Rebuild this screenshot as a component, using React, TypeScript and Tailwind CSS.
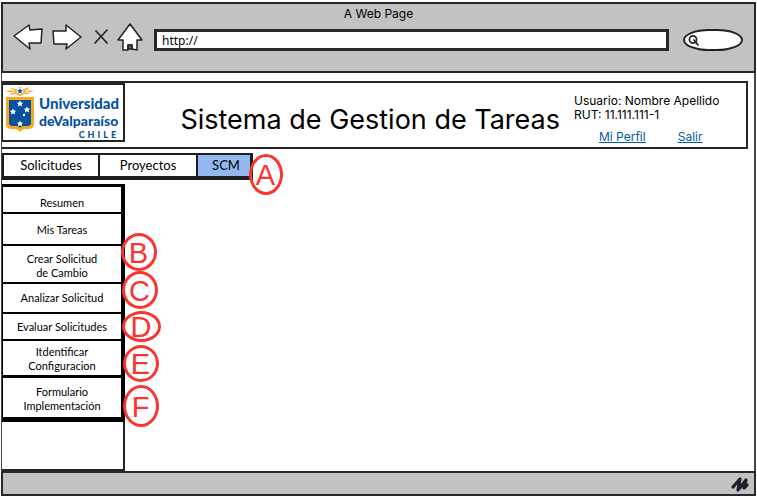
import type { ReactNode } from "react";

type Marker = { letter: string; place: string };

const menu: { lines: string[]; box: string; marker?: Marker }[] = [
  { lines: ["Resumen"], box: "h-[27px] border-b-2 pt-[9px]" },
  { lines: ["Mis Tareas"], box: "h-8 border-b-2 pt-[9px]" },
  {
    lines: ["Crear Solicitud", "de Cambio"],
    box: "h-[38px] border-b-2 pt-[6px]",
    marker: { letter: "B", place: "left-[119px] -top-[13px] h-[38px] w-9" },
  },
  {
    lines: ["Analizar Solicitud"],
    box: "h-[30px] border-b-2 pt-[7px]",
    marker: { letter: "C", place: "left-[120px] -top-[13px] h-[38px] w-9" },
  },
  {
    lines: ["Evaluar Solicitudes"],
    box: "h-[27px] border-b-2 pt-[6px]",
    marker: { letter: "D", place: "left-[120px] -top-[3px] h-[31px] w-[39px]" },
  },
  {
    lines: ["Itdentificar", "Configuracion"],
    box: "h-[37px] border-b-[3px] pt-[4px]",
    marker: { letter: "E", place: "left-[121px] top-[4px] h-[37px] w-9" },
  },
  {
    lines: ["Formulario", "Implementación"],
    box: "h-[44px] border-b-[5px] pt-[7px]",
    marker: { letter: "F", place: "left-[121px] top-[7px] h-[42px] w-9" },
  },
];

function Badge({ letter, place }: Marker) {
  return (
    <span
      className={`absolute z-10 flex items-center justify-center rounded-[50%] border-[3px] border-[#f9352f] pt-[2px] pr-px font-['Liberation_Sans',sans-serif] text-[29px] leading-none text-[#f9352f] ${place}`}
    >
      {letter}
    </span>
  );
}

function ToolButton({ label, children }: { label: string; children: ReactNode }) {
  return (
    <button type="button" aria-label={label} className="shrink-0">
      {children}
    </button>
  );
}

function Crest() {
  return (
    <svg viewBox="0 0 30 48" className="h-12 w-[30px] shrink-0" aria-hidden="true">
      <path d="M0 5 L8 4 L5 2 L12 3 Q15 -1 18 3 L25 1 L22 4 L29 5 L23 7 L26 8 L19 8 Q15 12 11 8 L4 9 L7 7Z" fill="#f8b43c" />
      <path d="M3 3 L10 5 M3 7 L10 6 M27 3 L20 5 M27 7 L20 6" stroke="#fff" strokeWidth=".7" />
      <circle cx="15" cy="5" r="3.2" fill="#fff" />
      <path d="M15 2l.9 2 2.1.2-1.6 1.4.5 2.1-1.9-1.1-1.9 1.1.5-2.1L12 4.200l2.100-.2z" fill="#1457a0" />
      <path d="M1 11H29V38Q29 43 23 43H20Q17 43 15 46Q13 43 10 43H7Q1 43 1 38Z" fill="#f7a823" />
      <path d="M4 14H26V37Q26 40 22 40H19Q16 40 15 42Q14 40 11 40H8Q4 40 4 37Z" fill="#07529f" />
      <g fill="#fff">
        <path d="M15 14.500l1 2 2.200.2-1.600 1.500.5 2.300-2.100-1.200-2.100 1.200.5-2.300-1.600-1.500 2.200-.2z" />
        <path d="M8 22.500l1 2 2.200.2-1.600 1.500.5 2.300-2.100-1.200-2.100 1.200.5-2.300-1.600-1.500 2.200-.2z" />
        <path d="M22 20.500l1 2 2.200.2-1.600 1.500.5 2.300-2.100-1.200-2.100 1.200.5-2.300-1.600-1.500 2.200-.2z" />
        <path d="M15 34.500l1 2 2.200.2-1.600 1.500.5 2.300-2.100-1.200-2.100 1.200.5-2.300-1.600-1.500 2.200-.2z" />
        <circle cx="19" cy="29" r="1.200" />
      </g>
    </svg>
  );
}

export default function App() {
  return (
    <div className="flex min-h-screen flex-col bg-white px-px pt-[2px] pb-[2px] font-[Inter,sans-serif] text-black">
      <header className="h-[71px] border-2 border-[#25282b] bg-[#c2c2c2]">
        <h1 className="pt-[2px] text-center text-xs leading-4">A Web Page</h1>
        <div className="flex items-center pt-px pr-[11px] pl-[10px]">
          <ToolButton label="Atrás">
            <svg viewBox="0 0 30 28" className="h-7 w-[30px]" fill="#fff" stroke="#222" strokeWidth="1.500" strokeLinejoin="round">
              <path d="M1 13 L16 2 L17 7 L29 6 L28 20 L16 20 L17 26Z" />
            </svg>
          </ToolButton>
          <span className="w-[9px]" />
          <ToolButton label="Adelante">
            <svg viewBox="0 0 30 28" className="h-7 w-[30px]" fill="#fff" stroke="#222" strokeWidth="1.500" strokeLinejoin="round">
              <path d="M1 8 L14 8 L14 2 L29 14 L14 26 L15 21 L2 21Z" />
            </svg>
          </ToolButton>
          <span className="w-3" />
          <ToolButton label="Detener">
            <svg viewBox="0 0 14 28" className="h-7 w-[14px]" fill="none" stroke="#222" strokeWidth="1.700" strokeLinecap="round">
              <path d="M2 8 L13 20 M13 7 L1 20" />
            </svg>
          </ToolButton>
          <span className="w-[9px]" />
          <ToolButton label="Inicio">
            <svg viewBox="0 0 26 28" className="h-7 w-[26px]" fill="#fff" stroke="#222" strokeWidth="1.500" strokeLinejoin="round">
              <path d="M13 1 L25 17 L20 17 L20 27 L15 26 L15 22 L11 22 L11 27 L6 27 L6 17 L1 17Z" />
              <path d="M11 22H15V26H11Z" fill="#555" />
            </svg>
          </ToolButton>
          <input
            aria-label="Dirección"
            defaultValue="http://"
            className="mt-[6px] ml-[11px] h-[22px] min-w-0 flex-1 border-[3px] border-[#25282d] bg-white pl-[5px] font-['Noto_Sans',sans-serif] text-xs leading-4 outline-none"
          />
          <label className="mt-[6px] ml-[14px] flex h-[22px] w-[60px] shrink-0 items-center rounded-[26px/11px] border-2 border-[#222] bg-white pl-[3px]">
            <svg viewBox="0 0 12 13" className="h-[13px] w-3 shrink-0" fill="none" stroke="#222" strokeWidth="1.700" strokeLinecap="round">
              <circle cx="5" cy="5.500" r="3.600" />
              <path d="M6 6 L10 11" />
            </svg>
            <input type="search" aria-label="Buscar" className="w-8 min-w-0 bg-transparent text-xs outline-none" />
          </label>
        </div>
      </header>

      <main className="flex flex-1 flex-col border-r-2 border-l border-[#44464c] pt-2">
        <section className="mr-[6px] flex h-[68px] border-2 border-l-0 border-[#25252a]">
          <div className="flex h-[59px] w-[123px] shrink-0 border-2 border-l border-[#222] pt-px pl-[2px]">
            <Crest />
            <div className="pt-2 pl-[4px] font-[Lato,sans-serif] font-black text-[#07529f]">
              <p className="text-[15px] leading-[18px]">Universidad</p>
              <p className="text-[14px] leading-[17px]">deValparaíso</p>
              <p className="text-right text-[9px] leading-[11px] tracking-[3px]">CHILE</p>
            </div>
          </div>
          <h2 className="flex-1 pt-[19px] pr-[14px] text-right text-[27px] leading-9 whitespace-nowrap">
            Sistema de Gestion de Tareas
          </h2>
          <div className="w-[172px] shrink-0 pt-[11px] text-xs leading-[14px]">
            <p>Usuario: Nombre Apellido</p>
            <p>RUT: 11.111.111-1</p>
            <div className="flex gap-[32px] pt-2 pl-[25px] text-[#0759a0] underline">
              <a href="#perfil">Mi Perfil</a>
              <a href="#salir">Salir</a>
            </div>
          </div>
        </section>

        <nav className="mt-1 flex h-[27px] font-[Lato,sans-serif] text-[13px]">
          <button type="button" className="w-[98px] border-2 border-b-4 border-[#1c1e22]">Solicitudes</button>
          <button type="button" className="w-[98px] border-2 border-b-4 border-l-0 border-[#1c1e22]">Proyectos</button>
          <div className="relative flex">
            <button type="button" className="w-[55px] border-2 border-r-[3px] border-b-4 border-l-0 border-[#1c1e22] bg-[#93b8f0] pl-1">SCM</button>
            <Badge letter="A" place="left-[51px] top-px h-[41px] w-[34px]" />
          </div>
        </nav>

        <aside className="mt-[4px] flex w-[123px] flex-1 flex-col border-r-2 border-b-2 border-[#222]">
          <ul className="w-[123px] border-t-[3px] border-black font-[Lato,sans-serif] text-[11px] leading-[14px]">
            {menu.map((item) => (
              <li key={item.lines[0]} className="relative">
                <button type="button" className={`flex w-full flex-col items-center border-r-4 border-l border-black bg-white ${item.box}`}>
                  {item.lines.map((line) => (
                    <span key={line}>{line}</span>
                  ))}
                </button>
                {item.marker && <Badge {...item.marker} />}
              </li>
            ))}
          </ul>
        </aside>
      </main>

      <footer className="flex h-[25px] items-center justify-end border-2 border-[#25282d] bg-[#c2c2c2] pr-[5px]">
        <svg viewBox="0 0 18 16" className="h-4 w-[18px]" fill="none" stroke="#211f2c" strokeWidth="3.200" strokeLinecap="round" strokeLinejoin="round" aria-hidden="true">
          <path d="M2 11 L9 3 L7 14 L15 4 L13 12 L16 9" />
        </svg>
      </footer>
    </div>
  );
}
